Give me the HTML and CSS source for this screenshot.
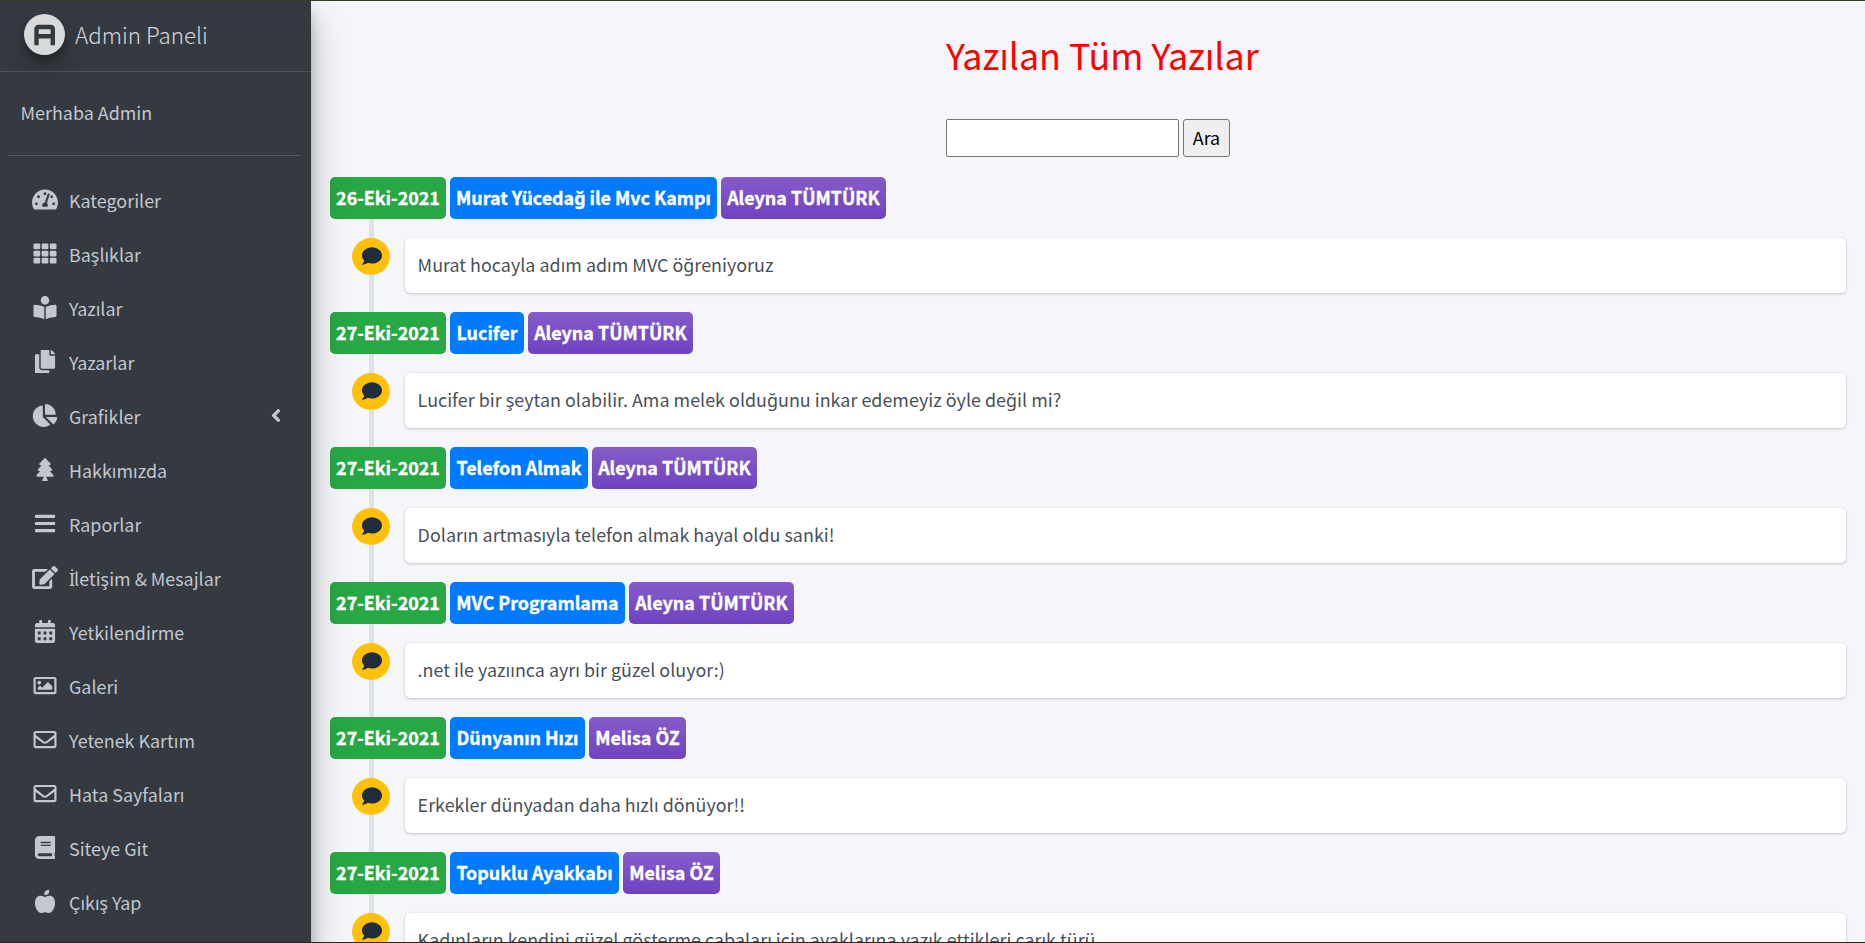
FILE: index.html
```html
<!DOCTYPE html>
<html lang="tr">
<head>
<meta charset="utf-8">
<title>Admin Paneli</title>
<link rel="stylesheet" href="styles.css">
</head>
<body>
<svg class="sprite" aria-hidden="true">
  <symbol id="comment" viewBox="0 0 512 512"><path d="M256 32C114.6 32 0 125.1 0 240c0 49.6 21.4 95 57 130.7C44.5 421.1 2.7 466 2.2 466.5c-2.2 2.3-2.8 5.7-1.5 8.7S4.8 480 8 480c66.3 0 116-31.8 140.6-51.4 32.7 12.3 69 19.4 107.4 19.4 141.4 0 256-93.1 256-208S397.4 32 256 32z"/></symbol>
  <symbol id="envelope" viewBox="0 0 512 512"><path d="M464 64H48C21.49 64 0 85.49 0 112v288c0 26.51 21.49 48 48 48h416c26.51 0 48-21.49 48-48V112c0-26.51-21.49-48-48-48zm0 48v40.805c-22.422 18.259-58.168 46.651-134.587 106.49-16.841 13.247-50.201 45.072-73.413 44.701-23.208.375-56.579-31.459-73.413-44.701C106.18 199.465 70.425 171.067 48 152.805V112h416zM48 400V214.398c22.914 18.251 55.409 43.862 104.938 82.646 21.857 17.205 60.134 55.186 103.062 54.955 42.717.231 80.509-37.199 103.053-54.947 49.528-38.783 82.032-64.401 104.947-82.653V400H48z"/></symbol>
</svg>
<div class="wrapper">
  <aside class="sidebar">
    <a class="brand">
      <span class="logo"><svg viewBox="0 0 41 41"><path d="M12.500 31.300V15.500Q12.500 13 15 13H26.300Q28.800 13 28.800 15.500V31.300M12.500 22.300H28.800" fill="none" stroke="#36393b" stroke-width="4.400"/></svg></span>
      <span class="brand-text">Admin Paneli</span>
    </a>
    <div class="user">Merhaba Admin</div>
    <nav class="menu">
      <a class="item"><svg class="icon wide" viewBox="0 0 576 512"><path d="M288 32C128.94 32 0 160.94 0 320c0 52.8 14.25 102.26 39.06 144.8 5.61 9.62 16.3 15.2 27.44 15.2h443c11.14 0 21.83-5.58 27.44-15.2C561.75 422.26 576 372.8 576 320c0-159.06-128.94-288-288-288zm0 64c14.71 0 26.58 10.13 30.32 23.65-1.11 2.26-2.64 4.23-3.45 6.67l-9.22 27.67c-5.13 3.49-10.97 6.01-17.64 6.01-17.67 0-32-14.33-32-32S270.33 96 288 96zM96 384c-17.67 0-32-14.33-32-32s14.33-32 32-32 32 14.33 32 32-14.33 32-32 32zm48-160c-17.67 0-32-14.33-32-32s14.33-32 32-32 32 14.33 32 32-14.33 32-32 32zm246.77-72.41l-61.33 184C343.13 347.33 352 364.54 352 384c0 11.72-3.38 22.55-8.88 32H232.88c-5.5-9.45-8.88-20.28-8.88-32 0-33.94 26.5-61.43 59.9-63.59l61.34-184.01c4.17-12.56 17.73-19.45 30.36-15.17 12.57 4.19 19.35 17.79 15.17 30.36zm14.66 57.2l15.52-46.55c3.47-1.29 7.13-2.23 11.05-2.23 17.67 0 32 14.33 32 32s-14.33 32-32 32c-11.38-.01-20.89-6.28-26.57-15.22zM480 384c-17.67 0-32-14.33-32-32s14.33-32 32-32 32 14.33 32 32-14.33 32-32 32z"/></svg><span>Kategoriler</span></a>
      <a class="item"><svg class="icon" viewBox="0 0 512 512"><rect x="0" y="32" width="149.300" height="128" rx="24"/><rect x="181.300" y="32" width="149.300" height="128" rx="24"/><rect x="362.700" y="32" width="149.300" height="128" rx="24"/><rect x="0" y="192" width="149.300" height="128" rx="24"/><rect x="181.300" y="192" width="149.300" height="128" rx="24"/><rect x="362.700" y="192" width="149.300" height="128" rx="24"/><rect x="0" y="352" width="149.300" height="128" rx="24"/><rect x="181.300" y="352" width="149.300" height="128" rx="24"/><rect x="362.700" y="352" width="149.300" height="128" rx="24"/></svg><span>Başlıklar</span></a>
      <a class="item"><svg class="icon" viewBox="0 0 512 512"><path d="M352 96c0-53.02-42.98-96-96-96s-96 42.98-96 96 42.98 96 96 96 96-42.98 96-96zM233.59 241.1c-59.33-36.32-155.43-46.3-203.79-49.05C13.55 191.13 0 203.51 0 219.14v222.8c0 14.33 11.59 26.28 26.49 27.05 43.66 2.29 131.99 10.68 193.04 41.43 9.37 4.72 20.48-1.71 20.48-11.87V252.56c-.01-4.67-2.32-8.95-6.42-11.46zm248.61-49.05c-48.35 2.74-144.46 12.73-203.78 49.05-4.1 2.51-6.41 6.96-6.41 11.63v245.79c0 10.19 11.14 16.63 20.54 11.9 61.04-30.72 149.32-39.11 192.97-41.4 14.9-.78 26.49-12.73 26.49-27.06V219.14c-.01-15.63-13.56-28.01-29.81-27.09z"/></svg><span>Yazılar</span></a>
      <a class="item"><svg class="icon" viewBox="0 0 448 512"><path d="M320 448v40c0 13.255-10.745 24-24 24H24c-13.255 0-24-10.745-24-24V120c0-13.255 10.745-24 24-24h72v296c0 30.879 25.121 56 56 56h168zm0-344V0H152c-13.255 0-24 10.745-24 24v368c0 13.255 10.745 24 24 24h272c13.255 0 24-10.745 24-24V128H344c-13.2 0-24-10.8-24-24zm120.971-31.029L375.029 7.029A24 24 0 0 0 358.059 0H352v96h96v-6.059a24 24 0 0 0-7.029-16.97z"/></svg><span>Yazarlar</span></a>
      <a class="item"><svg class="icon wide" viewBox="0 0 544 512"><path d="M527.79 288H290.5l158.03 158.03c6.04 6.04 15.98 6.53 22.19.68 38.7-36.46 65.32-85.61 73.13-140.86 1.34-9.46-6.51-17.85-16.06-17.85zm-15.83-64.8C503.72 103.74 408.26 8.28 288.8.04 279.68-.59 272 7.1 272 16.24V240h223.77c9.14 0 16.82-7.68 16.19-16.8zM224 288V50.71c0-9.55-8.39-17.4-17.84-16.06C86.99 51.49-4.1 155.6.14 280.37 4.5 408.51 114.83 513.59 243.03 511.98c50.4-.63 96.97-16.87 135.26-44.03 7.9-5.6 8.42-17.23 1.57-24.08L224 288z"/></svg><span>Grafikler</span><svg class="caret" viewBox="0 0 256 512"><path d="M31.700 239l136-136c9.400-9.400 24.600-9.400 33.900 0l22.600 22.600c9.400 9.400 9.400 24.600 0 33.900L127.900 256l96.400 96.400c9.400 9.400 9.400 24.600 0 33.900L201.700 409c-9.400 9.400-24.600 9.400-33.900 0l-136-136c-9.500-9.400-9.500-24.600-.1-34z"/></svg></a>
      <a class="item"><svg class="icon" viewBox="0 0 384 512"><path d="M378.31 378.49L298.42 288h30.63c9.01 0 16.98-5 20.78-13.06 3.8-8.04 2.55-17.26-3.28-24.05L268.42 160h28.89c9.1 0 17.3-5.35 20.86-13.61 3.52-8.13 1.86-17.59-4.24-24.08L203.66 4.83c-6.03-6.45-17.28-6.45-23.32 0L70.06 122.31c-6.1 6.49-7.75 15.95-4.24 24.08C69.38 154.65 77.59 160 86.69 160h28.89l-78.14 90.91c-5.81 6.78-7.06 15.99-3.27 24.04C37.97 283 45.93 288 54.95 288h30.63L5.69 378.49c-6 6.79-7.36 16.09-3.56 24.26 3.75 8.05 12 13.25 21.01 13.25H160v24.45l-30.29 48.4c-5.32 10.64 2.42 23.16 14.31 23.16h95.96c11.89 0 19.63-12.52 14.31-23.16L224 440.45V416h136.86c9.01 0 17.26-5.2 21.01-13.25 3.8-8.17 2.44-17.47-3.56-24.26z"/></svg><span>Hakkımızda</span></a>
      <a class="item"><svg class="icon" viewBox="0 0 448 512"><rect y="60" width="448" height="72" rx="16"/><rect y="220" width="448" height="72" rx="16"/><rect y="380" width="448" height="72" rx="16"/></svg><span>Raporlar</span></a>
      <a class="item"><svg class="icon wide" viewBox="0 0 576 512"><path d="M402.6 83.2l90.2 90.2c3.8 3.8 3.8 10 0 13.8L274.4 405.6l-92.8 10.3c-12.4 1.4-22.9-9.1-21.5-21.5l10.3-92.8L388.8 83.2c3.8-3.8 10-3.8 13.8 0zm162-22.9l-48.8-48.8c-15.2-15.2-39.9-15.2-55.2 0l-35.4 35.4c-3.8 3.8-3.8 10 0 13.8l90.2 90.2c3.8 3.8 10 3.8 13.8 0l35.4-35.4c15.2-15.3 15.2-40 0-55.2zM384 346.2V448H64V128h229.8c3.2 0 6.2-1.3 8.5-3.5l40-40c7.6-7.6 2.2-20.5-8.5-20.5H48C21.5 64 0 85.5 0 112v352c0 26.5 21.5 48 48 48h352c26.5 0 48-21.5 48-48V306.2c0-10.7-12.9-16-20.5-8.5l-40 40c-2.2 2.3-3.5 5.3-3.5 8.5z"/></svg><span><b class="dotted">İ</b>letişim &amp; Mesajlar</span></a>
      <a class="item"><svg class="icon" viewBox="0 0 448 512"><path fill-rule="evenodd" d="M0 464c0 26.500 21.500 48 48 48h352c26.500 0 48-21.500 48-48V192H0zM64 256h64v64H64zM192 256h64v64h-64zM320 256h64v64h-64zM64 384h64v64H64zM192 384h64v64h-64zM320 384h64v64h-64zM400 64h-48V16c0-8.800-7.200-16-16-16h-32c-8.800 0-16 7.200-16 16v48H160V16c0-8.800-7.200-16-16-16h-32c-8.800 0-16 7.200-16 16v48H48C21.500 64 0 85.500 0 112v48h448v-48c0-26.500-21.500-48-48-48z"/></svg><span>Yetkilendirme</span></a>
      <a class="item"><svg class="icon" viewBox="0 0 512 512"><path d="M464 64H48C21.49 64 0 85.49 0 112v288c0 26.51 21.49 48 48 48h416c26.51 0 48-21.49 48-48V112c0-26.51-21.49-48-48-48zm-6 336H54a6 6 0 0 1-6-6V118a6 6 0 0 1 6-6h404a6 6 0 0 1 6 6v276a6 6 0 0 1-6 6zM128 152c-22.091 0-40 17.909-40 40s17.909 40 40 40 40-17.909 40-40-17.909-40-40-40zM96 352h320v-80l-87.515-87.515c-4.686-4.686-12.284-4.686-16.971 0L192 304l-39.515-39.515c-4.686-4.686-12.284-4.686-16.971 0L96 304v48z"/></svg><span>Galeri</span></a>
      <a class="item"><svg class="icon"><use href="#envelope"/></svg><span>Yetenek Kartım</span></a>
      <a class="item"><svg class="icon"><use href="#envelope"/></svg><span>Hata Sayfaları</span></a>
      <a class="item"><svg class="icon" viewBox="0 0 448 512"><path d="M448 360V24c0-13.3-10.7-24-24-24H96C43 0 0 43 0 96v320c0 53 43 96 96 96h328c13.3 0 24-10.7 24-24v-16c0-7.5-3.5-14.3-8.9-18.7-4.2-15.4-4.2-59.3 0-74.7 5.4-4.3 8.9-11.1 8.9-18.6zM128 134c0-3.3 2.7-6 6-6h212c3.3 0 6 2.7 6 6v20c0 3.3-2.7 6-6 6H134c-3.3 0-6-2.7-6-6v-20zm0 64c0-3.3 2.7-6 6-6h212c3.3 0 6 2.7 6 6v20c0 3.3-2.7 6-6 6H134c-3.3 0-6-2.7-6-6v-20zm253.4 250H96c-17.7 0-32-14.3-32-32 0-17.6 14.4-32 32-32h285.4c-1.9 17.1-1.9 46.9 0 64z"/></svg><span>Siteye Git</span></a>
      <a class="item"><svg class="icon" viewBox="0 0 448 512"><path d="M350.85 129c25.97 4.67 47.27 18.67 63.92 42 14.65 20.67 24.64 46.67 29.96 78 4.67 28.67 4.32 57.33-1 86-7.99 47.33-23.97 87-47.94 119-28.64 38.67-64.59 58-107.87 58-10.66 0-22.3-3.33-34.96-10-8.66-5.33-18.31-8-28.97-8s-20.3 2.67-28.97 8c-12.66 6.67-24.3 10-34.96 10-43.28 0-79.23-19.33-107.87-58-23.97-32-39.95-71.67-47.94-119-5.32-28.67-5.67-57.33-1-86 5.32-31.33 15.31-57.33 29.96-78 16.65-23.33 37.95-37.33 63.92-42 15.98-2.67 37.95-.33 65.92 7 23.97 6.67 44.28 14.67 60.93 24 16.65-9.33 36.96-17.33 60.93-24 27.98-7.33 49.96-9.67 65.94-7zm-54.94-41c-9.32 8.67-21.65 15-36.96 19-10.66 3.33-22.3 5-34.96 5l-14.98-1c-1.33-9.33-1.33-20 0-32 2.67-24 10.32-42.33 22.97-55 9.32-8.67 21.65-15 36.96-19 10.66-3.33 22.3-5 34.96-5l14.98 1 1 15c0 12.67-1.67 24.33-4.99 35-3.99 15.33-10.31 27.67-18.98 37z"/></svg><span>Çıkış Yap</span></a>
    </nav>
  </aside>
  <main class="content">
    <header class="head">
      <h1>Yazılan Tüm Yazılar</h1>
      <form class="search"><input type="text" aria-label="Ara"><button type="button">Ara</button></form>
    </header>
    <section class="timeline">
      <div class="labels"><span class="tag date">26-Eki-2021</span><span class="tag topic w1">Murat Yücedağ ile Mvc Kampı</span><span class="tag author">Aleyna TÜMTÜRK</span></div>
      <div class="entry"><span class="dot"><svg><use href="#comment"/></svg></span><p class="card"><span>Murat hocayla adım adım MVC öğreniyoruz</span></p></div>
      <div class="labels"><span class="tag date">27-Eki-2021</span><span class="tag topic w2">Lucifer</span><span class="tag author">Aleyna TÜMTÜRK</span></div>
      <div class="entry"><span class="dot"><svg><use href="#comment"/></svg></span><p class="card"><span>Lucifer bir şeytan olabilir. Ama melek olduğunu inkar edemeyiz öyle değil mi?</span></p></div>
      <div class="labels"><span class="tag date">27-Eki-2021</span><span class="tag topic w3">Telefon Almak</span><span class="tag author">Aleyna TÜMTÜRK</span></div>
      <div class="entry"><span class="dot"><svg><use href="#comment"/></svg></span><p class="card"><span>Doların artmasıyla telefon almak hayal oldu sanki!</span></p></div>
      <div class="labels"><span class="tag date">27-Eki-2021</span><span class="tag topic w4">MVC Programlama</span><span class="tag author">Aleyna TÜMTÜRK</span></div>
      <div class="entry"><span class="dot"><svg><use href="#comment"/></svg></span><p class="card"><span>.net ile yazıınca ayrı bir güzel oluyor:)</span></p></div>
      <div class="labels"><span class="tag date">27-Eki-2021</span><span class="tag topic w5">Dünyanın Hızı</span><span class="tag author short">Melisa ÖZ</span></div>
      <div class="entry"><span class="dot"><svg><use href="#comment"/></svg></span><p class="card"><span>Erkekler dünyadan daha hızlı dönüyor!!</span></p></div>
      <div class="labels"><span class="tag date">27-Eki-2021</span><span class="tag topic w6">Topuklu Ayakkabı</span><span class="tag author short">Melisa ÖZ</span></div>
      <div class="entry"><span class="dot"><svg><use href="#comment"/></svg></span><p class="card"><span>Kadınların kendini güzel gösterme çabaları için ayaklarına yazık ettikleri çarık türü</span></p></div>
    </section>
  </main>
</div>
</body>
</html>
```
FILE: styles.css
```css
* { box-sizing: border-box; }
body {
  margin: 0;
  height: 943px;
  overflow: hidden;
  border-top: 1px solid #2f3f26;
  border-bottom: 1px solid #3d1c1c;
  background: #f4f6f9;
  color: #212529;
  font: 17.9px/30px "Noto Sans CJK SC", "Noto Sans", sans-serif;
}
.sprite { display: none; }
svg { display: block; fill: currentColor; }
.wrapper { display: flex; height: 941px; overflow: hidden; }

.sidebar {
  width: 311px;
  flex: none;
  z-index: 1;
  background: #343a40;
  color: #c2c7d0;
  box-shadow: 0 18px 35px rgba(0,0,0,.25), 0 12px 12px rgba(0,0,0,.22);
}
.brand {
  display: flex;
  align-items: center;
  height: 71px;
  padding: 0 0 3px 24px;
  gap: 10px;
  border-bottom: 1px solid #4b545c;
  color: rgba(255,255,255,.8);
  font-size: 22.4px;
  font-weight: 300;
}
.brand-text { margin-top: -2px; }
.logo {
  width: 41px;
  height: 41px;
  border-radius: 50%;
  background: #d7d9da;
  box-shadow: 0 12px 24px rgba(0,0,0,.19), 0 7px 7px rgba(0,0,0,.23);
}
.user {
  height: 84px;
  margin: 0 10px 0 8px;
  padding: 25px 0 0 12.6px;
  border-bottom: 1px solid #4f5962;
}
.menu { padding-top: 20px; }
.item {
  display: flex;
  align-items: center;
  height: 50px;
  margin-bottom: 4px;
  padding: 0 29px 0 31px;
}
.item > span { margin-top: -2px; }
.icon { width: 28px; height: 23px; margin: -3px 10px 0 0; }
.dotted { font-family: "Noto Sans", sans-serif; font-size: 18px; font-weight: 400; margin-right: -1px; }
.caret { width: 12px; height: 21px; margin: -4px 0 0 auto; }

.content { flex: 1; padding: 0 19px 0 19px; }
.head { padding-left: 616px; height: 176px; }
h1 {
  margin: 0;
  padding-top: 29px;
  color: red;
  font-size: 35.85px;
  font-weight: 400;
  line-height: 48px;
  white-space: nowrap;
}
.search { display: flex; gap: 4px; margin: 41px 0 0; }
.search input { width: 233px; height: 38px; border: 1px solid #767676; border-radius: 2px; background: #fff; }
.search button {
  width: 47px;
  height: 38px;
  padding: 0 0 2px;
  border: 1px solid #767676;
  border-radius: 3px;
  background: #efefef;
  color: #000;
  font: inherit;
}

.timeline { background: linear-gradient(#dee2e6, #dee2e6) 39px 0 / 5px 100% no-repeat; }
.labels { display: flex; gap: 4px; height: 42px; margin-bottom: 19px; }
.tag {
  display: flex;
  justify-content: center;
  align-items: center;
  height: 42px;
  padding-bottom: 2px;
  border-radius: 5px;
  color: #fff;
  font-weight: 700;
  -webkit-text-stroke: .35px #fff;
  white-space: nowrap;
}
.date { width: 116px; background: #28a745; }
.topic { background: #007bff; }
.author { width: 165px; background: linear-gradient(#855cc9, #6f42c1); }
.short { width: 97px; }
.w1 { width: 267px; }
.w2 { width: 74px; }
.w3 { width: 138px; }
.w4 { width: 175px; }
.w5 { width: 135px; }
.w6 { width: 169px; }
.entry { display: flex; height: 55px; margin-bottom: 19px; padding-left: 22px; }
.dot {
  display: flex;
  justify-content: center;
  align-items: center;
  width: 38px;
  height: 37px;
  padding: 0 0 2px 1px;
  border-radius: 50%;
  background: #ffc107;
  color: #1f2d3d;
}
.dot svg { width: 20px; height: 20px; }
.card {
  flex: 1;
  margin: 0 0 0 15px;
  padding: 11px 12.6px;
  border-radius: 5px;
  background: #fff;
  color: #495057;
  letter-spacing: .02px;
  box-shadow: 0 0 1px rgba(0,0,0,.125), 0 1px 3px rgba(0,0,0,.2);
}
```
